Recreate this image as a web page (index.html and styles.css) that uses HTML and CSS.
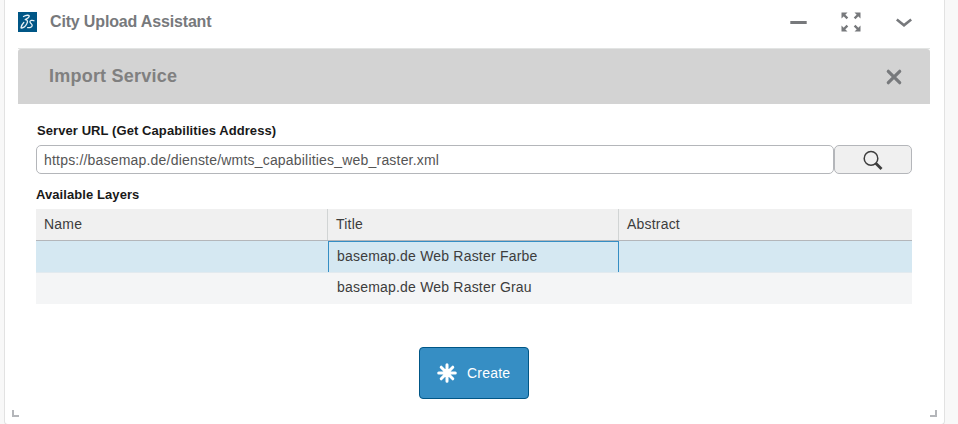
FILE: index.html
```html
<!DOCTYPE html>
<html lang="en">
<head>
<meta charset="utf-8">
<title>City Upload Assistant</title>
<link rel="stylesheet" href="styles.css">
</head>
<body>
<main class="widget">
  <header class="titlebar">
    <svg class="logo" width="19" height="20" viewBox="0 0 19 20">
      <rect width="19" height="20" fill="#005686"/>
      <g fill="none" stroke="#e6f0f5" stroke-width="1.3" stroke-linecap="round" stroke-linejoin="round">
        <path d="M5.500 4.500C8 3 11.300 2.800 11.200 4.200C11.100 5.500 9 6.800 7.200 7.600C9.700 7.800 10 9.500 8.800 11.800C7.500 14.200 5 16.300 3 15.900C3.300 13.800 4.300 12 5.800 10.500"/>
        <path d="M16 8.800C14.500 8 12 8.300 11.900 9.800C11.900 11.300 14.500 11.800 14.200 13.600C13.900 15.200 11.600 16 9.600 15.600"/>
      </g>
    </svg>
    <h1 class="app-name">City Upload Assistant</h1>
    <div class="controls">
      <svg width="17" height="20" viewBox="0 0 17 20"><path d="M.3 10.500H16.700" stroke="#77797c" stroke-width="3"/></svg>
      <svg width="20" height="20" viewBox="0 0 20 20">
        <g fill="#77797c" stroke="#77797c" stroke-width="2.400">
          <path d="M2 2L6.400 6.400M18 2L13.600 6.400M2 18L6.400 13.600M18 18L13.600 13.600"/>
          <path stroke="none" d="M.5 .5H6.500L.5 6.500ZM19.500 .5V6.500L13.500 .5ZM.5 19.500V13.500L6.500 19.500ZM19.500 19.500H13.500L19.500 13.500Z"/>
        </g>
      </svg>
      <svg width="16" height="20" viewBox="0 0 16 20"><path d="M.8 7.500L8 13.300L15.200 7.500" fill="none" stroke="#77797c" stroke-width="2.600"/></svg>
    </div>
  </header>
  <section class="dialog-head">
    <h2 class="dialog-title">Import Service</h2>
    <svg width="16" height="16" viewBox="0 0 16 16"><path d="M2.300 2.300L13.700 13.700M13.700 2.300L2.300 13.700" stroke="#77797c" stroke-width="3.200" stroke-linecap="round"/></svg>
  </section>
  <section class="form">
    <label class="label url-label" for="url">Server URL (Get Capabilities Address)</label>
    <div class="url-row">
      <input class="url" id="url" value="https://basemap.de/dienste/wmts_capabilities_web_raster.xml">
      <button class="search" aria-label="Search">
        <svg width="20" height="20" viewBox="0 0 20 20"><circle cx="8" cy="8.400" r="6.800" fill="none" stroke="#3d3d3d" stroke-width="1.500"/><path d="M12.500 13L18.500 19" stroke="#3d3d3d" stroke-width="2.800"/></svg>
      </button>
    </div>
    <div class="label layers-label">Available Layers</div>
    <div class="table">
      <div class="row head"><div class="cell">Name</div><div class="cell">Title</div><div class="cell">Abstract</div></div>
      <div class="row selected"><div class="cell"></div><div class="cell active">basemap.de Web Raster Farbe</div><div class="cell"></div></div>
      <div class="row alternate"><div class="cell"></div><div class="cell">basemap.de Web Raster Grau</div><div class="cell"></div></div>
    </div>
    <button class="create">
      <svg width="20" height="20" viewBox="0 0 20 20"><path d="M10 1.700V18.300M1.700 10H18.300M4.200 4.200L15.800 15.800M15.800 4.200L4.200 15.800" stroke="#fff" stroke-width="3" stroke-linecap="round"/></svg>
      <span class="create-text">Create</span>
    </button>
  </section>
  <i class="grip grip-left"></i>
  <i class="grip grip-right"></i>
</main>
</body>
</html>
```
FILE: styles.css
```css
* { box-sizing: border-box; }
body { margin: 0; height: 424px; overflow: hidden; background: #f8f8f8; font-family: "Liberation Sans", Arial, sans-serif; color: #3d3d3d; }
button, input { font: inherit; color: inherit; margin: 0; }
h1, h2 { margin: 0; }
.widget { position: relative; width: 941px; height: 425px; margin-left: 4px; padding: 0 14px 0 13px; background: #fff; border: solid #e2e2e2; border-width: 0 1px 1px; border-radius: 0 0 4px 4px; }
.titlebar { display: flex; align-items: center; height: 49px; padding-bottom: 4px; border-bottom: 1px solid #e2e4e3; }
.logo { display: block; }
.app-name { margin-left: 13px; font-size: 16px; line-height: 20px; letter-spacing: -0.16px; color: #77797c; white-space: nowrap; }
.controls { display: flex; align-items: center; gap: 35px; margin-left: auto; padding-right: 18px; }
.controls svg:first-child { margin-right: -1px; }
.dialog-head { display: flex; align-items: center; justify-content: space-between; height: 55px; padding: 0 28px 0 31px; background: #d3d3d3; border-radius: 3px 3px 0 0; }
.dialog-title { margin-top: -2px; font-size: 18px; line-height: 22px; letter-spacing: 0.22px; color: #808080; white-space: nowrap; }
.form { display: flex; flex-direction: column; padding: 19px 18px 0; }
.label { font-size: 13px; line-height: 16px; font-weight: bold; letter-spacing: 0.08px; color: #191919; white-space: nowrap; }
.url-label { padding-left: 1px; }
.url-row { display: flex; height: 29px; margin-top: 6px; }
.url { width: 798px; height: 29px; padding: 0 7px; border: 1px solid #b4b6ba; border-radius: 5px; outline: none; background: #fff; font-size: 14px; letter-spacing: 0.195px; color: #555; }
.search { display: flex; align-items: center; justify-content: center; width: 78px; height: 29px; padding: 0; border: 1px solid #b4b6ba; border-radius: 5px; background: #f0f0f0; }
.layers-label { margin-top: 13px; }
.table { margin-top: 6px; font-size: 14px; letter-spacing: 0.2px; }
.row { display: grid; grid-template-columns: 292px 291px 293px; height: 31px; }
.cell { padding-left: 9px; line-height: 28px; white-space: nowrap; }
.head { height: 32px; background: #f0f0f0; border-bottom: 1px solid #b4b6ba; }
.head .cell { padding-left: 8px; line-height: 30px; border-right: 1px solid #d1d4d4; }
.head .cell:last-child { border-right: 0; }
.selected { background: #d5e8f2; }
.alternate { background: #f4f5f6; border-top: 1px solid #e2eaef; height: 32px; }
.active { border: 1px solid #368ec4; border-bottom: 0; padding-left: 8px; }
.create { display: flex; align-items: center; align-self: center; width: 110px; height: 52px; margin: 43px 0 0; padding: 0 17px; border: 1px solid #005686; border-radius: 4px; background: #368ec4; color: #fff; font-size: 14px; letter-spacing: 0.2px; }
.create-text { margin-left: 10px; }
.grip { position: absolute; bottom: 7px; width: 7px; height: 7px; border: solid #b4b6ba; }
.grip-left { left: 7px; border-width: 0 0 2px 2px; }
.grip-right { right: 7px; border-width: 0 2px 2px 0; }
```
